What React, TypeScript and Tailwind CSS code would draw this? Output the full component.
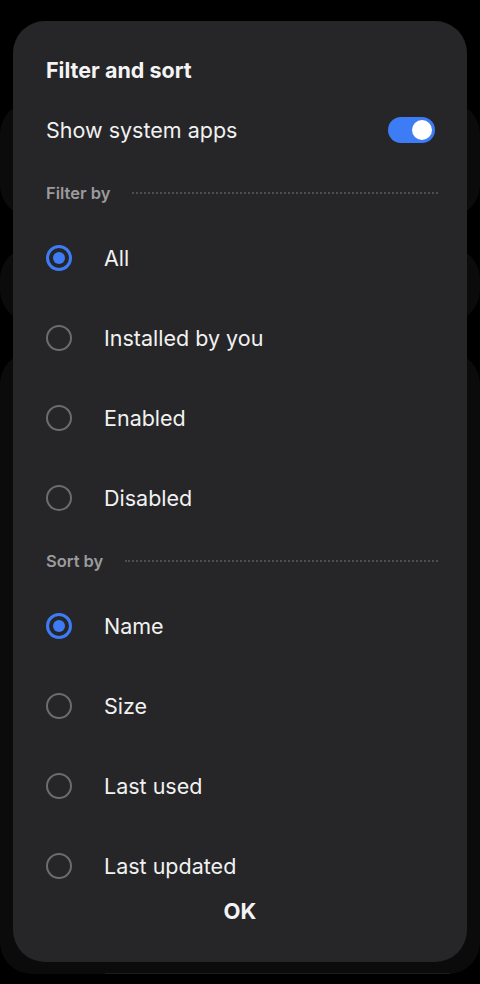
import { useState } from 'react'

const filters = ['All', 'Installed by you', 'Enabled', 'Disabled']
const sorts = ['Name', 'Size', 'Last used', 'Last updated']

function Radio({ checked }: { checked: boolean }) {
  return checked ? (
    <span className="flex h-[26px] w-[26px] items-center justify-center rounded-full border-[3px] border-[#3d7cf4]">
      <span className="h-[12px] w-[12px] rounded-full bg-[#3d7cf4]" />
    </span>
  ) : (
    <span className="h-[26px] w-[26px] rounded-full border-2 border-[#6c6c6e]" />
  )
}

function Section({ title }: { title: string }) {
  return (
    <div className="mr-[-4px] flex h-[46px] items-center gap-[22px]">
      <span className="text-[16.5px] font-semibold text-[#9b9b9d]">{title}</span>
      <span className="h-0 flex-1 border-t-2 border-dotted border-[#4e4e50]" />
    </div>
  )
}

function RadioRow({ label, checked, onClick }: { label: string; checked: boolean; onClick: () => void }) {
  return (
    <button onClick={onClick} className="flex h-[80px] w-full items-center gap-[32px] text-left">
      <Radio checked={checked} />
      <span className="text-[21.5px] text-[#f1f1f1]">{label}</span>
    </button>
  )
}

export default function App() {
  const [filter, setFilter] = useState('All')
  const [sort, setSort] = useState('Name')
  const [system, setSystem] = useState(true)

  return (
    <div className="relative h-[984px] w-[480px] overflow-hidden bg-black font-['Inter',sans-serif]">
      {/* dimmed page behind the dialog */}
      <div className="flex flex-col gap-[30px] pt-[102px]">
        <div className="h-[115px] rounded-[32px] bg-[#0b0b0b]" />
        <div className="h-[75px] rounded-[32px] bg-[#0b0b0b]" />
        <div className="h-[622px] rounded-[32px] bg-[#0b0b0b]" />
      </div>
      <div className="absolute bottom-[10px] left-[105px] right-[30px] h-px bg-[#1c1c1c]" />

      {/* dialog */}
      <div className="absolute left-[13px] right-[13px] top-[21px] flex h-[941px] flex-col rounded-[32px] bg-[#262628] px-[33px] pt-[34px]">
        <h2 className="text-[21.5px] font-bold leading-[30px] text-[#f4f4f4]">Filter and sort</h2>
        <div className="mt-[22px] flex h-[46px] items-center justify-between">
          <span className="text-[21.5px] text-[#f1f1f1]">Show system apps</span>
          <button
            onClick={() => setSystem(!system)}
            className={`mr-[-1px] flex h-[26px] w-[47px] items-center rounded-full px-[3px] ${system ? 'justify-end bg-[#3d7cf4]' : 'justify-start bg-[#5a5a5c]'}`}
          >
            <span className="h-[20px] w-[20px] rounded-full bg-white" />
          </button>
        </div>
        <div className="mt-[17px]">
          <Section title="Filter by" />
        </div>
        <div className="mt-[2px]">
          {filters.map((f) => (
            <RadioRow key={f} label={f} checked={filter === f} onClick={() => setFilter(f)} />
          ))}
        </div>
        <Section title="Sort by" />
        <div className="mt-[2px]">
          {sorts.map((s) => (
            <RadioRow key={s} label={s} checked={sort === s} onClick={() => setSort(s)} />
          ))}
        </div>
        <button className="mt-[-10px] self-center text-[22px] font-bold leading-[30px] text-[#f4f4f4]">OK</button>
      </div>
    </div>
  )
}
